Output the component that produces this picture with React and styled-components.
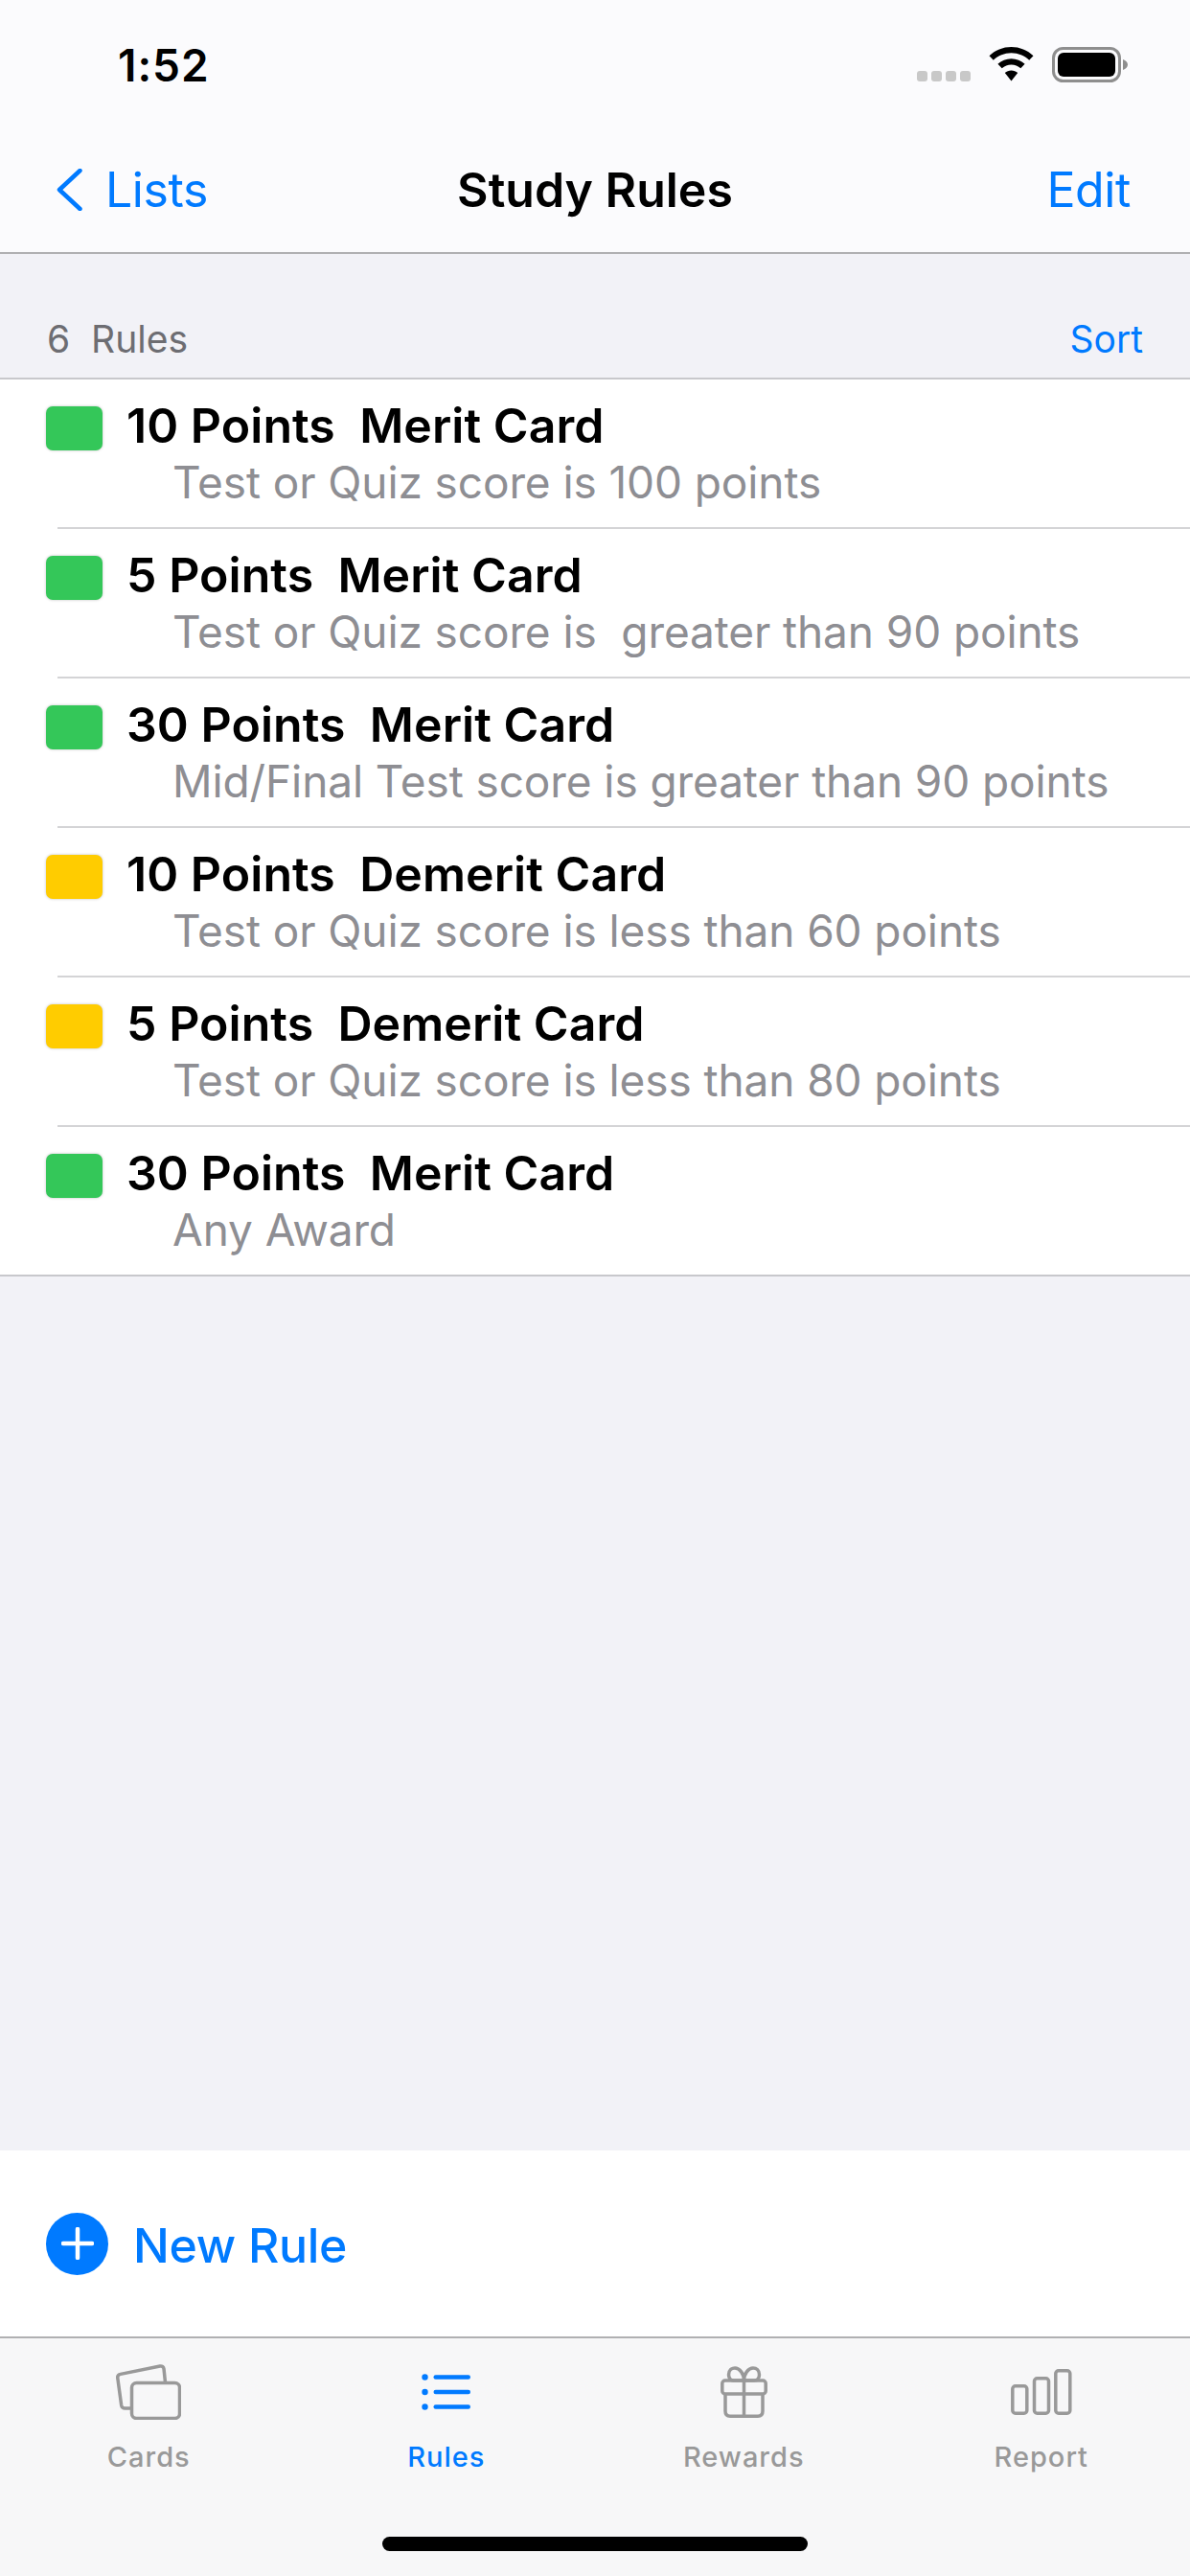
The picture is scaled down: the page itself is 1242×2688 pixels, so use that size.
import React from "react";
import styled, { createGlobalStyle } from "styled-components";

const GlobalStyle = createGlobalStyle`
  html, body {
    margin: 0;
    padding: 0;
    background: #f2f2f7;
  }
  body {
    font-family: Inter, "Liberation Sans", sans-serif;
    -webkit-font-smoothing: antialiased;
  }
`;

const BLUE = "#007aff";
const GREEN = "#34c759";
const YELLOW = "#ffcc00";
const TAB_GRAY = "#999999";

const Page = styled.div`
  width: 1242px;
  height: 2688px;
  display: flex;
  flex-direction: column;
  overflow: hidden;
  background: #f2f2f7;
`;

const TopBar = styled.header`
  height: 265px;
  flex: none;
  box-sizing: border-box;
  background: #fbfbfd;
  border-bottom: 2px solid #b0b0b2;
`;

const StatusBar = styled.div`
  height: 136px;
  box-sizing: border-box;
  padding: 42px 65px 0 123px;
  display: flex;
  justify-content: space-between;
`;

const Time = styled.div`
  font-size: 46px;
  font-weight: 600;
  line-height: 52px;
  color: #000;
  letter-spacing: 1px;
`;

const StatusIcons = styled.div`
  display: flex;
  align-items: flex-start;
  margin-top: 7px;
`;

const SignalDots = styled.div`
  display: flex;
  gap: 4px;
  margin: 25px 19px 0 0;
`;

const SignalDot = styled.span`
  width: 11px;
  height: 11px;
  border-radius: 3px;
  background: #c8c8c8;
`;

const NavBar = styled.nav`
  display: grid;
  grid-template-columns: 1fr auto 1fr;
  align-items: center;
  padding: 0 62px;
  height: 124px;
  box-sizing: border-box;
`;

const BackLink = styled.div`
  display: flex;
  align-items: center;
  gap: 24px;
  margin-left: -3px;
  color: ${BLUE};
  font-size: 50px;
  letter-spacing: -0.4px;
`;

const NavTitle = styled.div`
  font-size: 50px;
  font-weight: 600;
  color: #000;
`;

const NavAction = styled.div`
  justify-self: end;
  color: ${BLUE};
  font-size: 50px;
  letter-spacing: -0.4px;
`;

const SectionHeader = styled.div`
  height: 129px;
  flex: none;
  box-sizing: border-box;
  padding: 0 49px 15px 49px;
  display: flex;
  justify-content: space-between;
  align-items: flex-end;
  font-size: 39px;
  line-height: 50px;
`;

const Count = styled.span`
  color: #6d6d72;
  white-space: pre;
`;

const SortLink = styled.span`
  color: ${BLUE};
`;

const List = styled.section`
  flex: none;
  background: #fff;
  border-top: 2px solid #c8c8cc;
  border-bottom: 2px solid #c8c8cc;
`;

const Row = styled.div`
  height: 154px;
  box-sizing: border-box;
  padding: 28px 0 0 48px;
  display: flex;
  align-items: flex-start;
  gap: 25px;
`;

const Swatch = styled.div`
  width: 59px;
  height: 46px;
  flex: none;
  border-radius: 7px;
  background: ${(p) => (p.$kind === "demerit" ? YELLOW : GREEN)};
  box-shadow: 0 0 3px rgba(0, 0, 0, 0.25);
`;

const RowText = styled.div`
  display: flex;
  flex-direction: column;
  min-width: 0;
`;

const RowTitle = styled.div`
  font-size: 50px;
  font-weight: 600;
  line-height: 50px;
  color: #000;
  white-space: pre;
  letter-spacing: 0.05px;
  margin-top: -5px;
`;

const RowDetail = styled.div`
  font-size: 46px;
  line-height: 50px;
  color: #8e8e93;
  white-space: pre;
  margin: 9px 0 0 48px;
  letter-spacing: -0.1px;
`;

const Divider = styled.div`
  height: 2px;
  margin-left: 60px;
  background: #d4d4d6;
`;

const Spacer = styled.div`
  flex: 1;
`;

const Footer = styled.div`
  height: 194px;
  flex: none;
  box-sizing: border-box;
  background: #fff;
  padding-left: 48px;
  display: flex;
  align-items: center;
  gap: 26px;
`;

const PlusCircle = styled.div`
  width: 65px;
  height: 65px;
  border-radius: 50%;
  background: ${BLUE};
  display: flex;
  align-items: center;
  justify-content: center;
`;

const NewRuleLabel = styled.div`
  font-size: 50px;
  font-weight: 500;
  color: ${BLUE};
  margin-top: 3px;
  letter-spacing: -0.3px;
`;

const TabBar = styled.div`
  height: 250px;
  flex: none;
  box-sizing: border-box;
  background: #f7f7f8;
  border-top: 2px solid #b0b0b2;
  display: flex;
  flex-direction: column;
`;

const Tabs = styled.div`
  display: grid;
  grid-template-columns: repeat(4, 1fr);
`;

const Tab = styled.div`
  height: 207px;
  display: flex;
  flex-direction: column;
  align-items: center;
  color: ${(p) => (p.$active ? BLUE : TAB_GRAY)};
`;

const TabIcon = styled.div`
  height: 60px;
  margin-top: 26px;
  display: flex;
  align-items: center;
  justify-content: center;
`;

const TabLabel = styled.div`
  font-size: 29px;
  font-weight: 500;
  line-height: 36px;
  margin-top: 20px;
  letter-spacing: 1px;
`;

const HomeIndicator = styled.div`
  width: 444px;
  height: 15px;
  border-radius: 8px;
  background: #000;
  align-self: center;
`;

const WifiIcon = () => (
  <svg width="47" height="36" viewBox="0 0 47 36" style={{ marginRight: 19 }}>
    <path d="M23.5 0C14.7 0 6.6 3.4 0.5 9.2L4.8 13.7C9.8 9 16.3 6.2 23.5 6.2S37.200 9 42.2 13.700L46.500 9.200C40.400 3.400 32.300 0 23.500 0Z" fill="#000" />
    <path d="M23.5 12.200C18.100 12.200 13.200 14.300 9.400 17.800L13.700 22.300C16.400 19.900 19.800 18.400 23.500 18.400S30.600 19.900 33.300 22.300L37.600 17.800C33.800 14.300 28.900 12.200 23.500 12.200Z" fill="#000" />
    <path d="M23.500 24.400C21 24.400 18.600 25.300 16.800 26.900L23.500 35.500L30.200 26.900C28.400 25.300 26 24.400 23.500 24.400Z" fill="#000" />
  </svg>
);

const BatteryIcon = () => (
  <svg width="79" height="37" viewBox="0 0 79 37">
    <rect x="1.500" y="1.500" width="69" height="34" rx="10" fill="none" stroke="#8e8e8e" strokeWidth="3" />
    <rect x="6" y="6" width="60" height="25" rx="6" fill="#000" />
    <path d="M74 13C77 14 79 16 79 18.500S77 23 74 24Z" fill="#8e8e8e" />
  </svg>
);

const ChevronLeft = () => (
  <svg width="27" height="44" viewBox="0 0 27 44">
    <path d="M24.500 2L3 22L24.500 42" fill="none" stroke={BLUE} strokeWidth="4.500" strokeLinecap="round" strokeLinejoin="round" />
  </svg>
);

const PlusIcon = () => (
  <svg width="34" height="34" viewBox="0 0 34 34">
    <path d="M17 2V32M2 17H32" stroke="#fff" strokeWidth="4.500" strokeLinecap="round" />
  </svg>
);

const CardsIcon = () => (
  <svg width="68" height="58" viewBox="0 0 68 58" fill="none" stroke="currentColor" strokeWidth="3.500">
    <path d="M16 46H9.500C7.500 46 6 44.800 5.700 43L1.800 14.500C1.500 12.500 2.700 10.800 4.800 10.400L46 2C48.100 1.600 49.700 2.800 50 4.800L51.500 19" strokeLinejoin="round" />
    <rect x="16.500" y="19.500" width="50" height="37" rx="5" />
  </svg>
);

const ListIcon = () => (
  <svg width="51" height="38" viewBox="0 0 51 38" fill="currentColor">
    <circle cx="3.500" cy="3.500" r="3.200" />
    <circle cx="3.500" cy="19" r="3.200" />
    <circle cx="3.500" cy="34.500" r="3.200" />
    <rect x="12.500" y="1.300" width="38.500" height="4.400" rx="2.200" />
    <rect x="12.500" y="16.800" width="38.500" height="4.400" rx="2.200" />
    <rect x="12.500" y="32.300" width="38.500" height="4.400" rx="2.200" />
  </svg>
);

const GiftIcon = () => (
  <svg width="49" height="54" viewBox="0 0 49 54" fill="none" stroke="currentColor" strokeWidth="3.500" strokeLinejoin="round">
    <rect x="1.800" y="15" width="45.400" height="14" rx="3" />
    <path d="M5 29V47C5 50.500 7 52.200 10 52.200H39C42 52.200 44 50.500 44 47V29" />
    <path d="M24.500 15V52" />
    <path d="M24.500 15H14C10.500 15 8.500 12 8.500 9C8.500 4.500 11.500 2 15 2C20 2 24.500 8 24.500 15C24.500 8 29 2 34 2C37.500 2 40.500 4.500 40.500 9C40.500 12 38.500 15 35 15H24.500" />
  </svg>
);

const BarsIcon = () => (
  <svg width="64" height="48" viewBox="0 0 64 48" fill="none" stroke="currentColor" strokeWidth="3.500">
    <rect x="1.800" y="17.800" width="15" height="28.400" rx="3" />
    <rect x="24.500" y="9.800" width="15" height="36.400" rx="3" />
    <rect x="46.800" y="1.800" width="15" height="44.400" rx="3" />
  </svg>
);

const rules = [
  { title: "10 Points  Merit Card", detail: "Test or Quiz score is 100 points", kind: "merit" },
  { title: "5 Points  Merit Card", detail: "Test or Quiz score is  greater than 90 points", kind: "merit" },
  { title: "30 Points  Merit Card", detail: "Mid/Final Test score is greater than 90 points", kind: "merit" },
  { title: "10 Points  Demerit Card", detail: "Test or Quiz score is less than 60 points", kind: "demerit" },
  { title: "5 Points  Demerit Card", detail: "Test or Quiz score is less than 80 points", kind: "demerit" },
  { title: "30 Points  Merit Card", detail: "Any Award", kind: "merit" },
];

const tabs = [
  { label: "Cards", icon: <CardsIcon /> },
  { label: "Rules", icon: <ListIcon />, active: true },
  { label: "Rewards", icon: <GiftIcon /> },
  { label: "Report", icon: <BarsIcon /> },
];

const App = () => {
  return (
    <Page>
      <GlobalStyle />
      <TopBar>
        <StatusBar>
          <Time>1:52</Time>
          <StatusIcons>
            <SignalDots>
              <SignalDot />
              <SignalDot />
              <SignalDot />
              <SignalDot />
            </SignalDots>
            <WifiIcon />
            <BatteryIcon />
          </StatusIcons>
        </StatusBar>
        <NavBar>
          <BackLink>
            <ChevronLeft />
            Lists
          </BackLink>
          <NavTitle>Study Rules</NavTitle>
          <NavAction>Edit</NavAction>
        </NavBar>
      </TopBar>
      <SectionHeader>
        <Count>6  Rules</Count>
        <SortLink>Sort</SortLink>
      </SectionHeader>
      <List>
        {rules.map((rule, i) => (
          <React.Fragment key={i}>
            <Row>
              <Swatch $kind={rule.kind} />
              <RowText>
                <RowTitle>{rule.title}</RowTitle>
                <RowDetail>{rule.detail}</RowDetail>
              </RowText>
            </Row>
            {i < rules.length - 1 && <Divider />}
          </React.Fragment>
        ))}
      </List>
      <Spacer />
      <Footer>
        <PlusCircle>
          <PlusIcon />
        </PlusCircle>
        <NewRuleLabel>New Rule</NewRuleLabel>
      </Footer>
      <TabBar>
        <Tabs>
          {tabs.map((tab) => (
            <Tab key={tab.label} $active={tab.active}>
              <TabIcon>{tab.icon}</TabIcon>
              <TabLabel>{tab.label}</TabLabel>
            </Tab>
          ))}
        </Tabs>
        <HomeIndicator />
      </TabBar>
    </Page>
  );
};

export default App;
